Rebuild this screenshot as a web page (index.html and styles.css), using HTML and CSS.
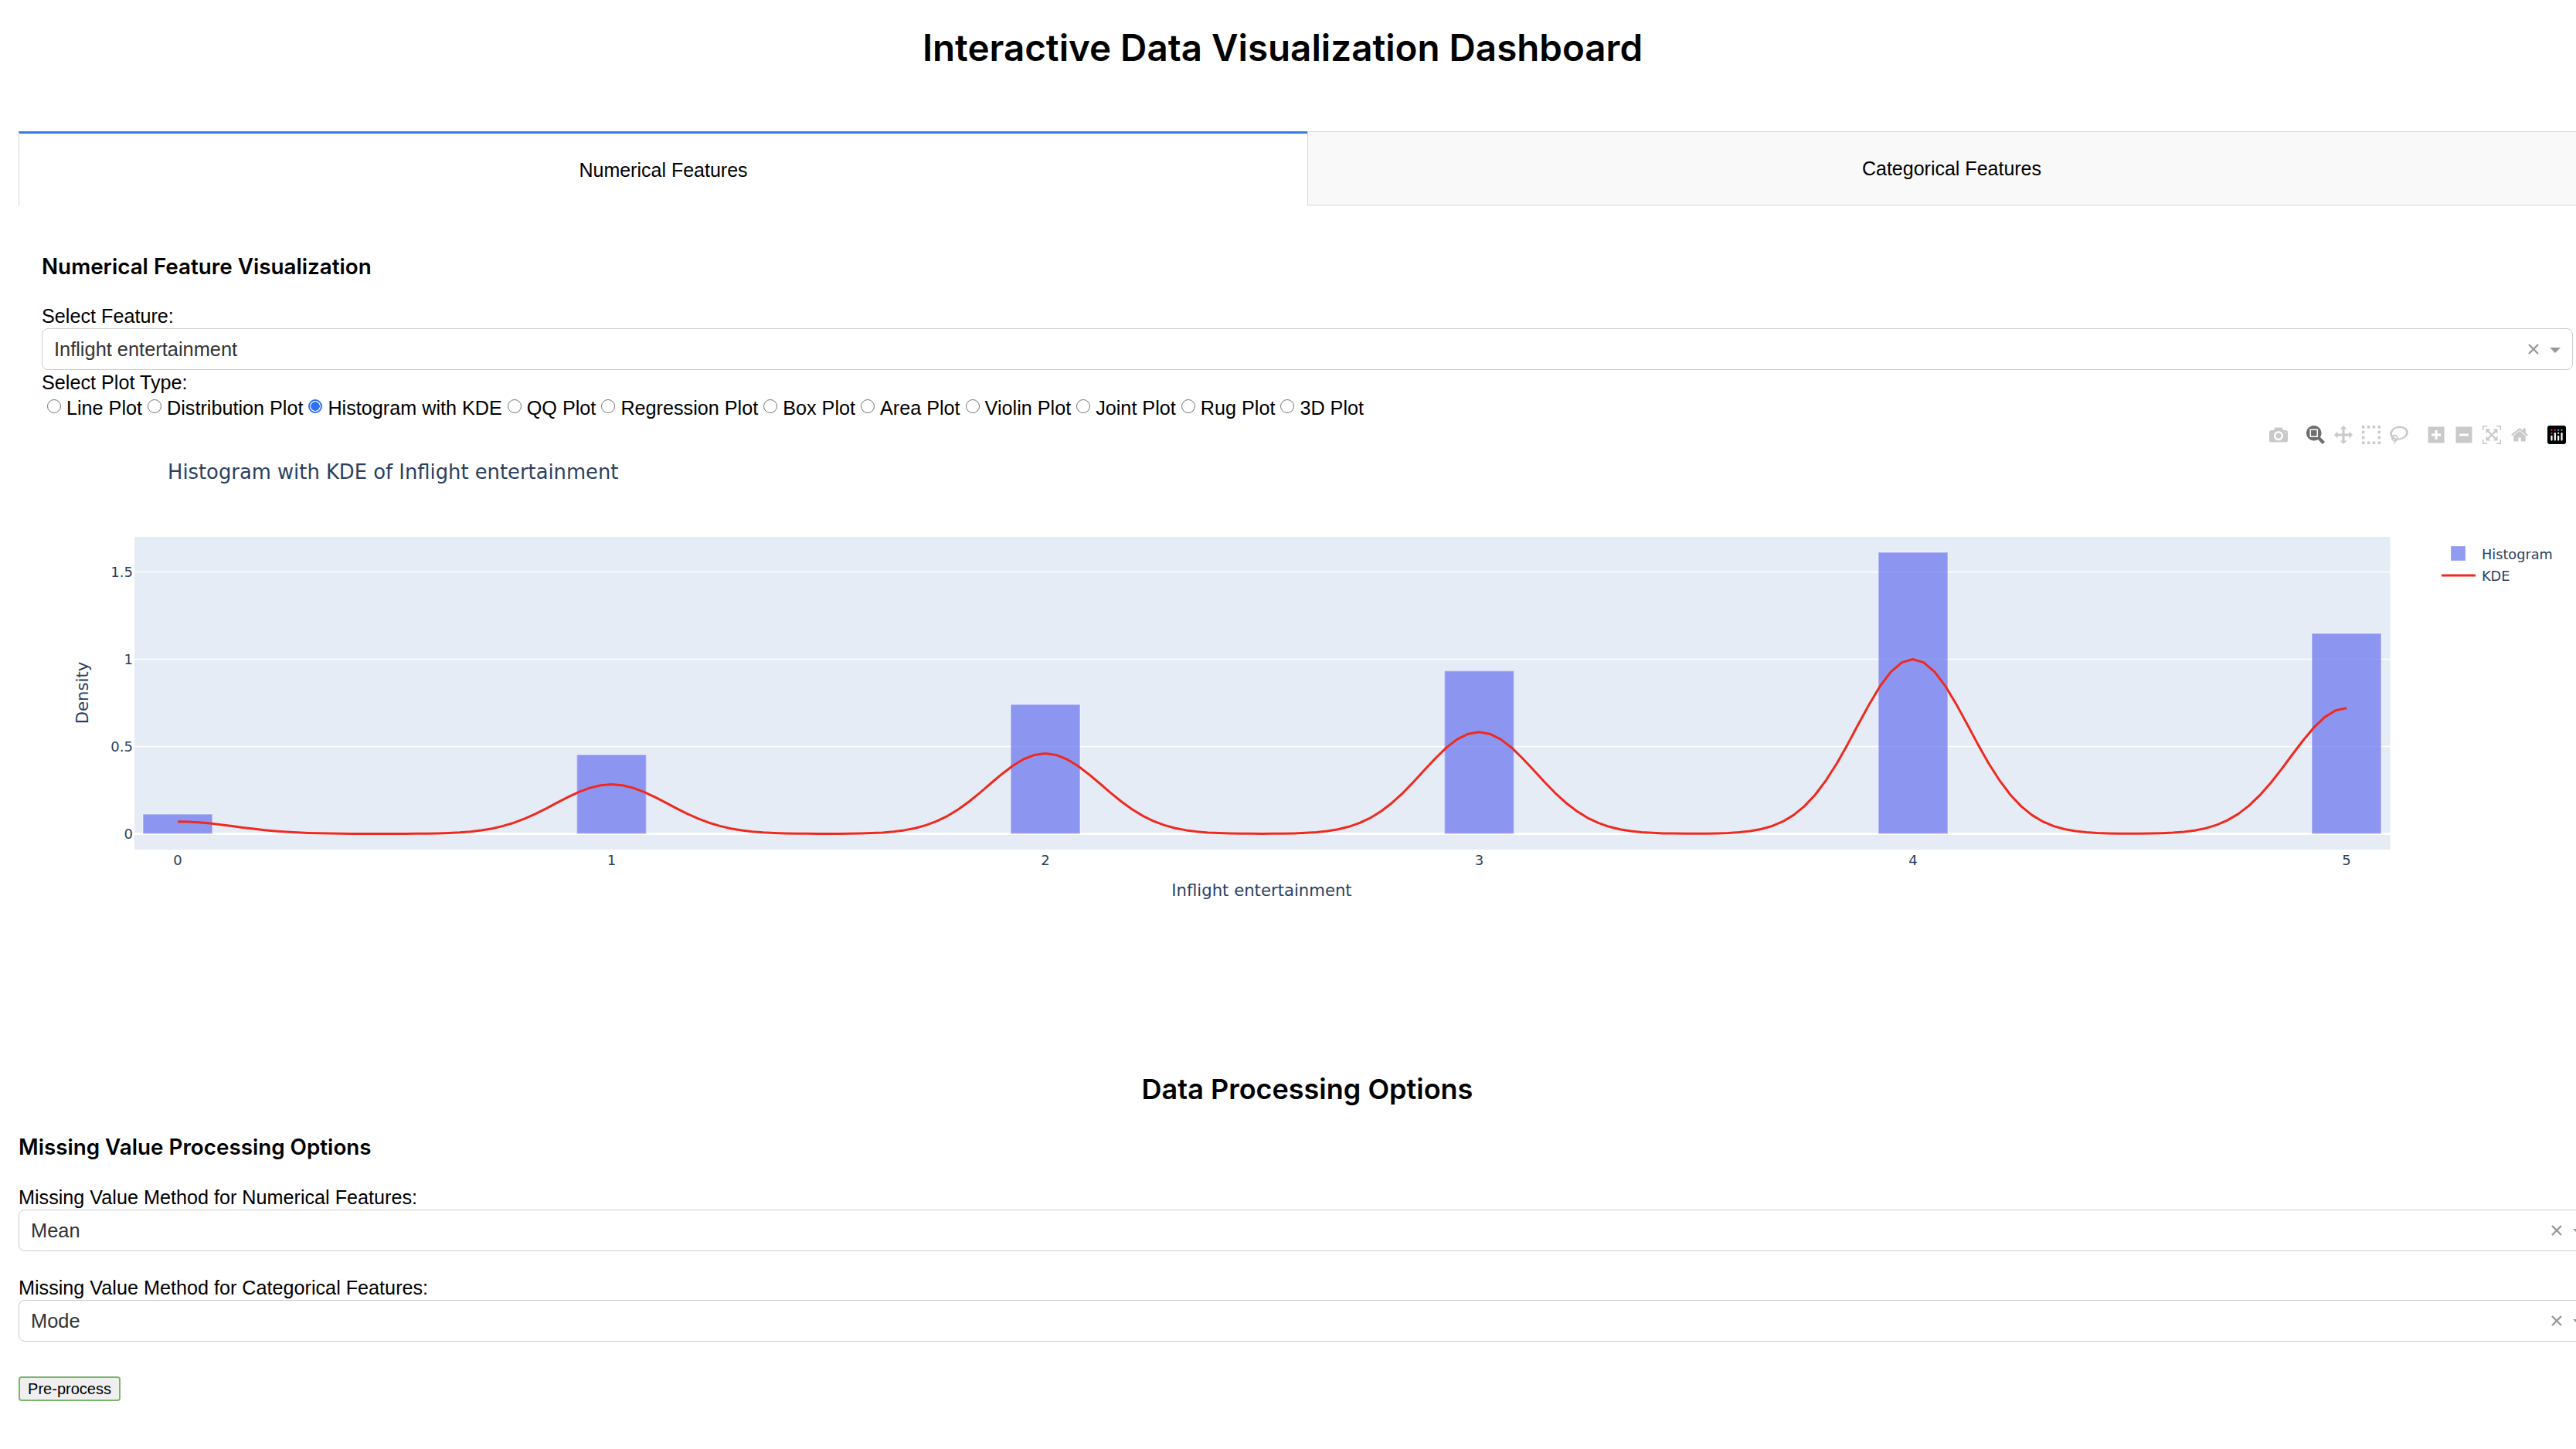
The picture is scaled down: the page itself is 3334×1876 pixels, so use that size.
FILE: index.html
```html
<!DOCTYPE html>
<html lang="en">
<head>
<meta charset="utf-8">
<title>Interactive Data Visualization Dashboard</title>
<link rel="stylesheet" href="styles.css">
</head>
<body>
<header class="page-header"><h1 class="page-title">Interactive Data Visualization Dashboard</h1></header>
<main class="main">
  <nav class="tabs">
    <div class="tab tab-active">Numerical Features</div>
    <div class="tab tab-idle">Categorical Features</div>
  </nav>
  <section class="tab-content">
    <h3 class="section-title">Numerical Feature Visualization</h3>
    <div class="field-label">Select Feature:</div>
    <div class="dropdown">
      <span class="dropdown-value">Inflight entertainment</span>
      <span class="dropdown-clear"><svg viewBox="0 0 14 14" class="clear-icon"><path d="M1 1L13 13M13 1L1 13"/></svg></span>
      <span class="dropdown-arrow"></span>
    </div>
    <div class="field-label">Select Plot Type:</div>
    <div class="radio-group">
      <label class="radio"><input type="radio" name="plot">Line Plot</label>
      <label class="radio"><input type="radio" name="plot">Distribution Plot</label>
      <label class="radio"><input type="radio" name="plot" checked>Histogram with KDE</label>
      <label class="radio"><input type="radio" name="plot">QQ Plot</label>
      <label class="radio"><input type="radio" name="plot">Regression Plot</label>
      <label class="radio"><input type="radio" name="plot">Box Plot</label>
      <label class="radio"><input type="radio" name="plot">Area Plot</label>
      <label class="radio"><input type="radio" name="plot">Violin Plot</label>
      <label class="radio"><input type="radio" name="plot">Joint Plot</label>
      <label class="radio"><input type="radio" name="plot">Rug Plot</label>
      <label class="radio"><input type="radio" name="plot">3D Plot</label>
    </div>
    <div class="graph">
      <div class="modebar">
        <div class="mode-group">
          <svg class="mode-icon" viewBox="0 0 1000 1000"><path transform="matrix(1 0 0 -1 0 850)" d="m500 450c-83 0-150-67-150-150 0-83 67-150 150-150 83 0 150 67 150 150 0 83-67 150-150 150z m400 150h-120c-16 0-34 13-39 29l-31 93c-6 15-23 28-40 28h-340c-16 0-34-13-39-28l-31-94c-6-15-23-28-40-28h-120c-55 0-100-45-100-100v-450c0-55 45-100 100-100h800c55 0 100 45 100 100v450c0 55-45 100-100 100z m-400-550c-138 0-250 112-250 250 0 138 112 250 250 250 138 0 250-112 250-250 0-138-112-250-250-250z m365 380c-19 0-35 16-35 35 0 19 16 35 35 35 19 0 35-16 35-35 0-19-16-35-35-35z"/></svg>
        </div>
        <div class="mode-group">
          <svg class="mode-icon mode-active" viewBox="0 0 1000 1000"><path transform="matrix(1 0 0 -1 0 850)" d="m1000-25l-250 251c40 63 63 138 63 218 0 224-182 406-407 406-224 0-406-182-406-406s183-406 407-406c80 0 155 22 218 62l250-250 125 125z m-812 250l0 438 437 0 0-438-437 0z m62 375l313 0 0-312-313 0 0 312z"/></svg>
          <svg class="mode-icon" viewBox="0 0 1000 1000"><path transform="matrix(1 0 0 -1 0 850)" d="m1000 350l-187 188 0-125-250 0 0 250 125 0-188 187-187-187 125 0 0-250-250 0 0 125-188-188 186-187 0 125 252 0 0-250-125 0 187-188 188 188-125 0 0 250 250 0 0-126 187 188z"/></svg>
          <svg class="mode-icon" viewBox="0 0 1000 1000"><path transform="matrix(1 0 0 -1 0 993)" d="m0 850l0 143 143 0 0-143-143 0z m286 0l0 143 143 0 0-143-143 0z m285 0l0 143 143 0 0-143-143 0z m286 0l0 143 143 0 0-143-143 0z m-857-286l0 143 143 0 0-143-143 0z m857 0l0 143 143 0 0-143-143 0z m-857-285l0 143 143 0 0-143-143 0z m857 0l0 143 143 0 0-143-143 0z m-857-286l0 143 143 0 0-143-143 0z m286 0l0 143 143 0 0-143-143 0z m285 0l0 143 143 0 0-143-143 0z m286 0l0 143 143 0 0-143-143 0z"/></svg>
          <svg class="mode-icon" viewBox="0 0 1031 1000"><path transform="matrix(1 0 0 -1 0 850)" d="m1018 538c-36 207-290 336-568 286-277-48-473-256-436-463 10-57 36-108 76-151-13-66 11-137 68-183 34-28 75-41 114-42l-55-70 0 0c-2-1-3-2-4-3-10-14-8-34 5-45 14-11 34-8 45 4 1 1 2 3 2 5l0 0 113 140c16 11 31 24 45 40 4 3 6 7 8 11 48-3 100 0 151 9 278 48 473 255 436 462z m-624-379c-80 14-149 48-197 96 42 42 109 47 156 9 33-26 47-66 41-105z m-187-74c-19 16-33 37-39 60 50-32 109-55 174-68-42-25-95-24-135 8z m360 75c-34-7-69-9-102-8 8 62-16 128-68 170-73 59-175 54-244-5-9 20-16 40-20 61-28 159 121 317 333 354s407-60 434-217c28-159-121-318-333-355z"/></svg>
        </div>
        <div class="mode-group">
          <svg class="mode-icon" viewBox="0 0 875 1000"><path transform="matrix(1 0 0 -1 0 850)" d="m1 787l0-875 875 0 0 875-875 0z m687-500l-187 0 0-187-125 0 0 187-188 0 0 125 188 0 0 187 125 0 0-187 187 0 0-125z"/></svg>
          <svg class="mode-icon" viewBox="0 0 875 1000"><path transform="matrix(1 0 0 -1 0 850)" d="m0 788l0-876 875 0 0 876-875 0z m688-500l-500 0 0 125 500 0 0-125z"/></svg>
          <svg class="mode-icon" viewBox="0 0 1000 1000"><path transform="matrix(1 0 0 -1 0 850)" d="m250 850l-187 0-63 0 0-62 0-188 63 0 0 188 187 0 0 62z m688 0l-188 0 0-62 188 0 0-188 62 0 0 188 0 62-62 0z m-875-938l0 188-63 0 0-188 0-62 63 0 187 0 0 62-187 0z m875 188l0-188-188 0 0-62 188 0 62 0 0 62 0 188-62 0z m-125 188l-1 0-93-94-156 156 156 156 92-93 2 0 0 250-250 0 0-2 93-92-156-156-156 156 94 92 0 2-250 0 0-250 0 0 93 93 157-156-157-156-93 94 0 0 0-250 250 0 0 0-94 93 156 157 156-157-93-93 0 0 250 0 0 250z"/></svg>
          <svg class="mode-icon" viewBox="0 0 928.6 1000"><path transform="matrix(1 0 0 -1 0 850)" d="m786 296v-267q0-15-11-26t-25-10h-214v214h-143v-214h-214q-15 0-25 10t-11 26v267q0 1 0 2t0 2l321 264 321-264q1-1 1-4z m124 39l-34-41q-5-5-12-6h-2q-7 0-12 3l-386 322-386-322q-7-4-13-4-7 2-12 7l-35 41q-4 5-3 13t6 12l401 334q18 15 42 15t43-15l136-114v109q0 8 5 13t13 5h107q8 0 13-5t5-13v-227l122-102q5-5 6-12t-4-13z"/></svg>
        </div>
        <div class="mode-group">
          <svg class="mode-logo" viewBox="0 0 132 132">
            <rect class="logo-bg" width="132" height="132" rx="16"/>
            <circle class="dot-red" cx="30" cy="32" r="6"/><circle class="dot-red" cx="54" cy="32" r="6"/><circle class="dot-blue" cx="78" cy="32" r="6"/><circle class="dot-cyan" cx="102" cy="32" r="6"/>
            <circle class="dot-red" cx="30" cy="54" r="6"/><circle class="dot-white" cx="78" cy="54" r="6"/>
            <rect class="bar-white" x="24" y="70" width="12" height="38" rx="6"/>
            <rect class="bar-white" x="48" y="50" width="12" height="58" rx="6"/>
            <rect class="bar-white" x="72" y="70" width="12" height="38" rx="6"/>
            <rect class="bar-white" x="96" y="50" width="12" height="58" rx="6"/>
          </svg>
        </div>
      </div>
      <svg class="chart" viewBox="54 544 3276 800">
        <text class="chart-title" x="217" y="620">Histogram with KDE of Inflight entertainment</text>
        <rect class="plot-bg" x="174" y="695" width="2919.5" height="405"/>
        <path class="grid" d="M174 740.5H3093.5M174 853.5H3093.5M174 966.5H3093.5"/>
        <path class="zero" d="M174 1079.5H3093.5"/>
        <g class="bars">
          <rect x="185" y="1054" width="90" height="25.5"/>
          <rect x="746.5" y="977" width="90" height="102.5"/>
          <rect x="1308" y="912" width="90" height="167.5"/>
          <rect x="1869.500" y="868.500" width="90" height="211"/>
          <rect x="2431" y="715" width="90" height="364.500"/>
          <rect x="2992" y="820" width="90" height="259.500"/>
        </g>
        <path id="kde" class="kde" d=""/>
        <g class="ytick">
          <text x="172" y="747">1.5</text><text x="172" y="860">1</text><text x="172" y="973">0.5</text><text x="172" y="1086">0</text>
        </g>
        <g class="xtick">
          <text x="230" y="1120">0</text><text x="791.500" y="1120">1</text><text x="1353" y="1120">2</text><text x="1914.500" y="1120">3</text><text x="2476" y="1120">4</text><text x="3037" y="1120">5</text>
        </g>
        <text class="axis-title" x="1633" y="1160">Inflight entertainment</text>
        <text class="axis-title" transform="translate(114 897) rotate(-90)">Density</text>
        <rect class="legend-bar" x="3172" y="707" width="19" height="19"/>
        <path class="kde" d="M3160 745H3204"/>
        <text class="legend-text" x="3212" y="724">Histogram</text>
        <text class="legend-text" x="3212" y="752">KDE</text>
      </svg>
    </div>
  </section>
  <section class="processing">
    <h2 class="processing-title">Data Processing Options</h2>
    <h3 class="processing-sub">Missing Value Processing Options</h3>
    <div class="field-label">Missing Value Method for Numerical Features:</div>
    <div class="dropdown">
      <span class="dropdown-value">Mean</span>
      <span class="dropdown-clear"><svg viewBox="0 0 14 14" class="clear-icon"><path d="M1 1L13 13M13 1L1 13"/></svg></span>
      <span class="dropdown-arrow"></span>
    </div>
    <div class="field-label field-label-spaced">Missing Value Method for Categorical Features:</div>
    <div class="dropdown">
      <span class="dropdown-value">Mode</span>
      <span class="dropdown-clear"><svg viewBox="0 0 14 14" class="clear-icon"><path d="M1 1L13 13M13 1L1 13"/></svg></span>
      <span class="dropdown-arrow"></span>
    </div>
    <button class="action" type="button">Pre-process</button>
  </section>
</main>
<script src="app.js"></script>
</body>
</html>
```
FILE: styles.css
```css
* { box-sizing: border-box; }
html, body { margin: 0; padding: 0; background: #fff; }
body {
  width: 3334px;
  height: 1876px;
  overflow: hidden;
  font-family: "Liberation Sans", Arial, sans-serif;
  color: #000;
}
.page-header { height: 170px; padding: 37px 14px 0 0; }
.page-title { margin: 0; text-align: center; font-family: Inter, "Liberation Sans", sans-serif; font-size: 47.5px; line-height: 50px; font-weight: 600; }
.main { margin-left: 24px; width: 3336px; }
.tabs { display: grid; grid-template-columns: 1668px 1668px; height: 96px; }
.tab { display: flex; align-items: center; justify-content: center; font-size: 25px; }
.tab-active { border-top: 3px solid #3a76f0; border-left: 1px solid #d6d6d6; background: #fff; padding-top: 2px; }
.tab-idle { border: 1px solid #d6d6d6; background: #f9f9f9; }
.tab-content { padding: 0 30px; }
.section-title { margin: 0; padding-top: 62px; height: 129px; font-family: Inter, "Liberation Sans", sans-serif; font-size: 27.8px; line-height: 34px; font-weight: 600; }
.field-label { font-size: 25.2px; line-height: 29px; height: 30px; }
.dropdown {
  display: flex; align-items: center; height: 54px;
  border: 1px solid #ccc; border-radius: 8px; background: #fff; margin-bottom: 2px;
  padding: 0 15px; color: #333; font-size: 25.4px;
}
.dropdown-value { flex: 1; }
.dropdown-clear { display: flex; margin-right: 14px; }
.clear-icon { width: 14px; height: 14px; fill: none; stroke: #999; stroke-width: 2.4; }
.dropdown-arrow { width: 0; height: 0; border: 7px solid transparent; border-top-color: #999; border-bottom-width: 0; margin-top: 2px; }
.radio-group { display: flex; gap: 7px; padding: 2px 0 0 7px; height: 33px; align-items: center; font-size: 25.2px; }
.radio { display: flex; align-items: center; gap: 7px; }
.radio input {
  appearance: none; width: 18px; height: 18px; margin: -6px 0 0;
  border: 1.5px solid #767676; border-radius: 50%; background: #fff;
}
.radio input:checked { border: 2px solid #2f6fed; background: radial-gradient(circle, #2f6fed 0 5.5px, #fff 6px); }
.graph { position: relative; height: 845px; }
.chart { display: block; width: 3276px; height: 800px; }
.modebar { position: absolute; top: 7px; right: 9px; display: flex; gap: 24px; }
.mode-group { display: flex; gap: 12px; }
.mode-icon { width: 24px; height: 24px; fill: #c9c9c9; }
.mode-active { fill: #6e6e6e; }
.mode-logo { width: 24px; height: 24px; }
.logo-bg { fill: #000; }
.dot-red { fill: #ef2f6b; }
.dot-blue { fill: #6fa8dc; }
.dot-cyan { fill: #5fd3e6; }
.dot-white { fill: #fff; }
.bar-white { fill: #fff; }
.chart-title { font-family: "DejaVu Sans", sans-serif; font-size: 25.8px; fill: #2a3f5f; }
.plot-bg { fill: #e5ecf6; }
.grid { stroke: #fff; stroke-width: 1.5; fill: none; }
.zero { stroke: #fff; stroke-width: 3; fill: none; }
.bars rect { fill: #6e79ee; fill-opacity: .75; stroke: #fff; stroke-opacity: .3; stroke-width: 2; }
.kde { fill: none; stroke: #ee2a20; stroke-width: 3; stroke-linejoin: round; }
.ytick text { font-family: "DejaVu Sans", sans-serif; font-size: 18px; fill: #2a3f5f; text-anchor: end; }
.xtick text { font-family: "DejaVu Sans", sans-serif; font-size: 18px; fill: #2a3f5f; text-anchor: middle; }
.axis-title { font-family: "DejaVu Sans", sans-serif; font-size: 21.2px; fill: #2a3f5f; text-anchor: middle; }
.legend-bar { fill: #6e79ee; fill-opacity: .75; stroke: #fff; stroke-opacity: .3; }
.legend-text { font-family: "DejaVu Sans", sans-serif; font-size: 17.7px; fill: #2a3f5f; }
.processing-title { margin: 0; text-align: center; font-family: Inter, "Liberation Sans", sans-serif; font-size: 36px; line-height: 42px; font-weight: 600; }
.processing-sub { margin: 0; padding-top: 37px; height: 105px; font-family: Inter, "Liberation Sans", sans-serif; font-size: 27.8px; line-height: 34px; font-weight: 600; }
.field-label-spaced { margin-top: 33px; }
.action {
  display: block; margin-top: 45px; width: 132px; height: 32px; padding: 0;
  border: 2px solid #7ab56b; border-radius: 4px; background: #efefef;
  font-family: "Liberation Sans", Arial, sans-serif; font-size: 20px; color: #000;
}
```
FILE: app.js
```js
(function () {
  var peaks = [0.07, 0.283, 0.46, 0.583, 1.0, 0.72];
  var sigma = 0.13, x0 = 230, dx = 561.4, y0 = 1079.5, dy = 226;
  var d = "";
  for (var i = 0; i <= 200; i++) {
    var x = i * 5 / 200, v = 0;
    for (var k = 0; k < peaks.length; k++) {
      v += peaks[k] * Math.exp(-Math.pow(x - k, 2) / (2 * sigma * sigma));
    }
    d += (i ? "L" : "M") + (x0 + x * dx).toFixed(1) + " " + (y0 - v * dy).toFixed(1);
  }
  document.getElementById("kde").setAttribute("d", d);
})();
```
